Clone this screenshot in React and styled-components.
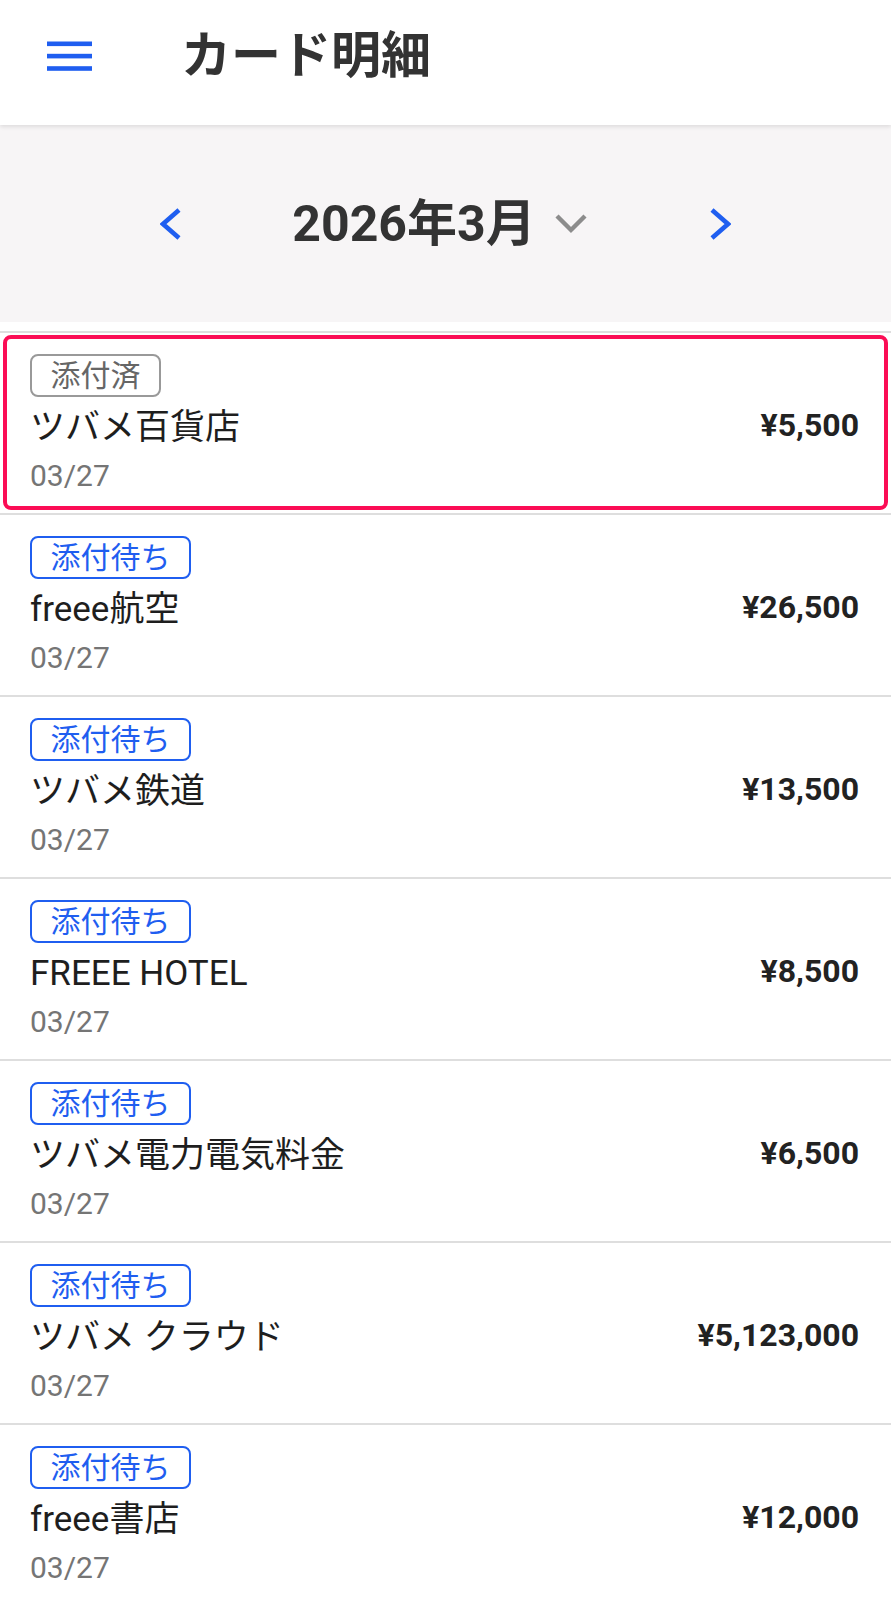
import React from 'react';
import styled, { createGlobalStyle, css } from 'styled-components';

const GlobalStyle = createGlobalStyle`
  * {
    box-sizing: border-box;
  }

  body {
    margin: 0;
    background: #fff;
    font-family: Roboto, "Noto Sans CJK JP", sans-serif;
    color: #222;
  }

  ul {
    margin: 0;
    padding: 0;
    list-style: none;
  }
`;

const transactions = [
  { id: 1, status: 'done', name: 'ツバメ百貨店', date: '03/27', amount: '¥5,500' },
  { id: 2, status: 'waiting', name: 'freee航空', date: '03/27', amount: '¥26,500' },
  { id: 3, status: 'waiting', name: 'ツバメ鉄道', date: '03/27', amount: '¥13,500' },
  { id: 4, status: 'waiting', name: 'FREEE HOTEL', date: '03/27', amount: '¥8,500' },
  { id: 5, status: 'waiting', name: 'ツバメ電力電気料金', date: '03/27', amount: '¥6,500' },
  { id: 6, status: 'waiting', name: 'ツバメ クラウド', date: '03/27', amount: '¥5,123,000' },
  { id: 7, status: 'waiting', name: 'freee書店', date: '03/27', amount: '¥12,000' },
];

function MenuIcon() {
  return (
    <svg width="45" height="30" viewBox="0 0 45 30">
      <rect x="0" y="0.5" width="45" height="4.6" fill="#1f5ef0" />
      <rect x="0" y="12.8" width="45" height="4.6" fill="#1f5ef0" />
      <rect x="0" y="25.2" width="45" height="4.6" fill="#1f5ef0" />
    </svg>
  );
}

function Chevron({ dir }) {
  const points = dir === 'left' ? '19,2 3,16 19,30' : '3,2 19,16 3,30';
  return (
    <svg width="22" height="32" viewBox="0 0 22 32">
      <polyline points={points} fill="none" stroke="#1f5ef0" strokeWidth="4.6" />
    </svg>
  );
}

function CaretDown() {
  return (
    <svg width="32" height="22" viewBox="0 0 32 22">
      <polyline points="2,3 16,17 30,3" fill="none" stroke="#8c8c8c" strokeWidth="4.4" />
    </svg>
  );
}

export default function App() {
  return (
    <Page>
      <GlobalStyle />
      <Header>
        <MenuButton>
          <MenuIcon />
        </MenuButton>
        <Title>カード明細</Title>
      </Header>

      <MonthBand>
        <NavButton>
          <Chevron dir="left" />
        </NavButton>
        <MonthPicker>
          <MonthLabel>2026年3月</MonthLabel>
          <CaretDown />
        </MonthPicker>
        <NavButton>
          <Chevron dir="right" />
        </NavButton>
      </MonthBand>

      <List>
        {transactions.map((t, i) => (
          <Row key={t.id} $selected={i === 0}>
            <Info>
              <Badge $done={t.status === 'done'}>
                {t.status === 'done' ? '添付済' : '添付待ち'}
              </Badge>
              <Name>{t.name}</Name>
              <DateText>{t.date}</DateText>
            </Info>
            <Amount>{t.amount}</Amount>
          </Row>
        ))}
      </List>
    </Page>
  );
}

const Page = styled.div`
  width: 100%;
  min-height: 1600px;
  background: #fff;
`;

const Header = styled.header`
  position: relative;
  z-index: 1;
  height: 125px;
  padding: 0 0 14px 47px;
  display: flex;
  align-items: center;
  background: #fff;
  box-shadow: 0 2px 4px rgba(0, 0, 0, 0.1);
`;

const MenuButton = styled.div`
  display: flex;
  width: 45px;
  height: 30px;
`;

const Title = styled.h1`
  margin: 0 0 0 89px;
  font-size: 50px;
  line-height: 60px;
  font-weight: 700;
  color: #333;
`;

const MonthBand = styled.div`
  height: 197px;
  display: flex;
  justify-content: center;
  align-items: center;
  background: #f7f5f6;
  margin-bottom: 9px;
`;

const NavButton = styled.div`
  display: flex;
  width: 22px;
  height: 32px;
`;

const MonthPicker = styled.div`
  display: flex;
  align-items: center;
  gap: 19px;
  margin: 0 122px 0 110px;
`;

const MonthLabel = styled.span`
  font-size: 50px;
  line-height: 60px;
  font-weight: 700;
  color: #333;
`;

const List = styled.ul`
  border-top: 2px solid #dedede;
`;

const focusRing = css`
  &::after {
    content: '';
    position: absolute;
    inset: 2px 3px 3px 3px;
    border: 4px solid #fb0d55;
    border-radius: 8px;
    pointer-events: none;
  }
`;

const Row = styled.li`
  position: relative;
  height: 182px;
  padding: 21px 32px 17px 30px;
  display: flex;
  align-items: center;
  justify-content: space-between;
  border-bottom: 2px solid #dedede;
  ${(p) => p.$selected && focusRing}
`;

const Info = styled.div`
  display: flex;
  flex-direction: column;
  align-items: flex-start;
`;

const Badge = styled.span`
  height: 43px;
  padding: 0 18.5px;
  border: 2px solid ${(p) => (p.$done ? '#999' : '#1f5ef0')};
  border-radius: 8px;
  font-size: 30px;
  line-height: 39px;
  color: ${(p) => (p.$done ? '#666' : '#1f5ef0')};
`;

const Name = styled.div`
  margin-top: 7px;
  font-size: 35px;
  line-height: 48px;
  color: #1e1e1e;
`;

const DateText = styled.div`
  margin-top: 4px;
  font-size: 30px;
  line-height: 40px;
  color: #757575;
`;

const Amount = styled.div`
  font-size: 32px;
  font-weight: 700;
  color: #222;
`;
